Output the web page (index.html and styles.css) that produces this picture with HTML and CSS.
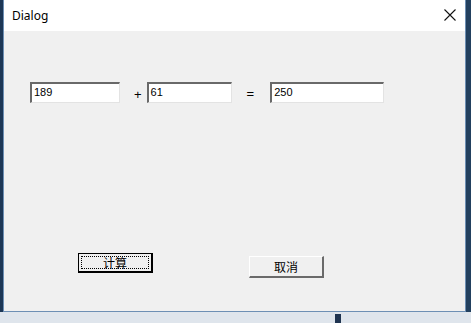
FILE: index.html
```html
<html><head>
<meta http-equiv="content-type" content="text/html; charset=UTF-8">
<link rel="stylesheet" href="styles.css">
</head>
<body>
<div class="desk">
  <div class="strip"></div>
  <div class="window">
    <div class="titlebar">
      <span class="title">Dialog</span>
      <svg class="close" width="12" height="12" viewBox="0 0 12 12">
        <path d="M0.5 0.5 L11.5 11.5 M11.5 0.5 L0.5 11.5" stroke="#111" stroke-width="1.1" fill="none"/>
      </svg>
    </div>
    <div class="client">
      <div class="sumrow">
        <div class="edit w1">189</div>
        <span class="op plus">+</span>
        <div class="edit w2">61</div>
        <span class="op eq">=</span>
        <div class="edit w3">250</div>
      </div>
      <div class="btnrow">
        <div class="btn focus"><span class="focusrect">计算</span></div>
        <div class="btn cancel">取消</div>
      </div>
    </div>
  </div>
  <div class="strip right"></div>
</div>
<div class="bottom"><div class="mark"></div></div>
</body></html>
```
FILE: styles.css
```css
* {
  box-sizing: border-box;
}
body {
  margin: 0;
  background: #dfe5ec;
  font-family: "Liberation Sans", Arial, sans-serif;
}
.desk {
  display: flex;
  height: 312px;
}
.strip {
  width: 3px;
  background: #1d3756;
}
.strip.right {
  width: 5px;
  background: #22405f;
}
.window {
  width: 463px;
  border: 1px solid #6d8fb4;
  border-top: 0;
  background: #f0f0f0;
  display: flex;
  flex-direction: column;
}
.titlebar {
  height: 31px;
  background: #ffffff;
  display: flex;
  align-items: center;
  padding: 0 0 0 8px;
}
.title {
  font-family: "Noto Sans", "Liberation Sans", sans-serif;
  font-size: 12px;
  color: #000;
  flex: 1;
  padding-bottom: 1px;
}
.close {
  margin-right: 9px;
  margin-top: -1px;
}
.client {
  flex: 1;
  padding: 51px 0 0 26px;
}
.sumrow {
  display: flex;
  align-items: center;
  height: 21px;
}
.edit {
  height: 21px;
  background: #fff;
  border-top: 2px solid #696969;
  border-left: 2px solid #696969;
  border-right: 1px solid #e3e3e3;
  border-bottom: 1px solid #e3e3e3;
  font-size: 11px;
  line-height: 17px;
  padding-left: 2px;
  color: #000;
}
.w1 { width: 90px; }
.w2 { width: 85px; }
.w3 { width: 114px; }
.op {
  font-size: 13px;
  color: #000;
}
.plus {
  margin: 3px 5px 0 14px;
}
.eq {
  margin: 1px 16px 0 15px;
}
.btnrow {
  display: flex;
  align-items: flex-start;
  margin-top: 150px;
  padding-left: 48px;
}
.btn {
  width: 75px;
  height: 20px;
  background: #f0f0f0;
  border-top: 1px solid #ffffff;
  border-left: 1px solid #ffffff;
  border-right: 2px solid #6a6a6a;
  border-bottom: 2px solid #6a6a6a;
  font-family: "Noto Sans CJK SC", sans-serif;
  font-size: 12px;
  color: #000;
  display: flex;
  align-items: center;
  justify-content: center;
}
.btn.focus {
  border: 1px solid #000;
  border-right-width: 2px;
  border-bottom-width: 2px;
  padding: 2px;
}
.focusrect {
  width: 100%;
  height: 100%;
  border: 1px dotted #000;
  display: flex;
  align-items: center;
  justify-content: center;
  line-height: 12px;
}
.btn.cancel {
  margin: 3px 0 0 96px;
  height: 22px;
}
.bottom {
  height: 11px;
  position: relative;
}
.mark {
  position: absolute;
  left: 335px;
  top: 2px;
  width: 6px;
  height: 9px;
  background: #1f3450;
}
```
